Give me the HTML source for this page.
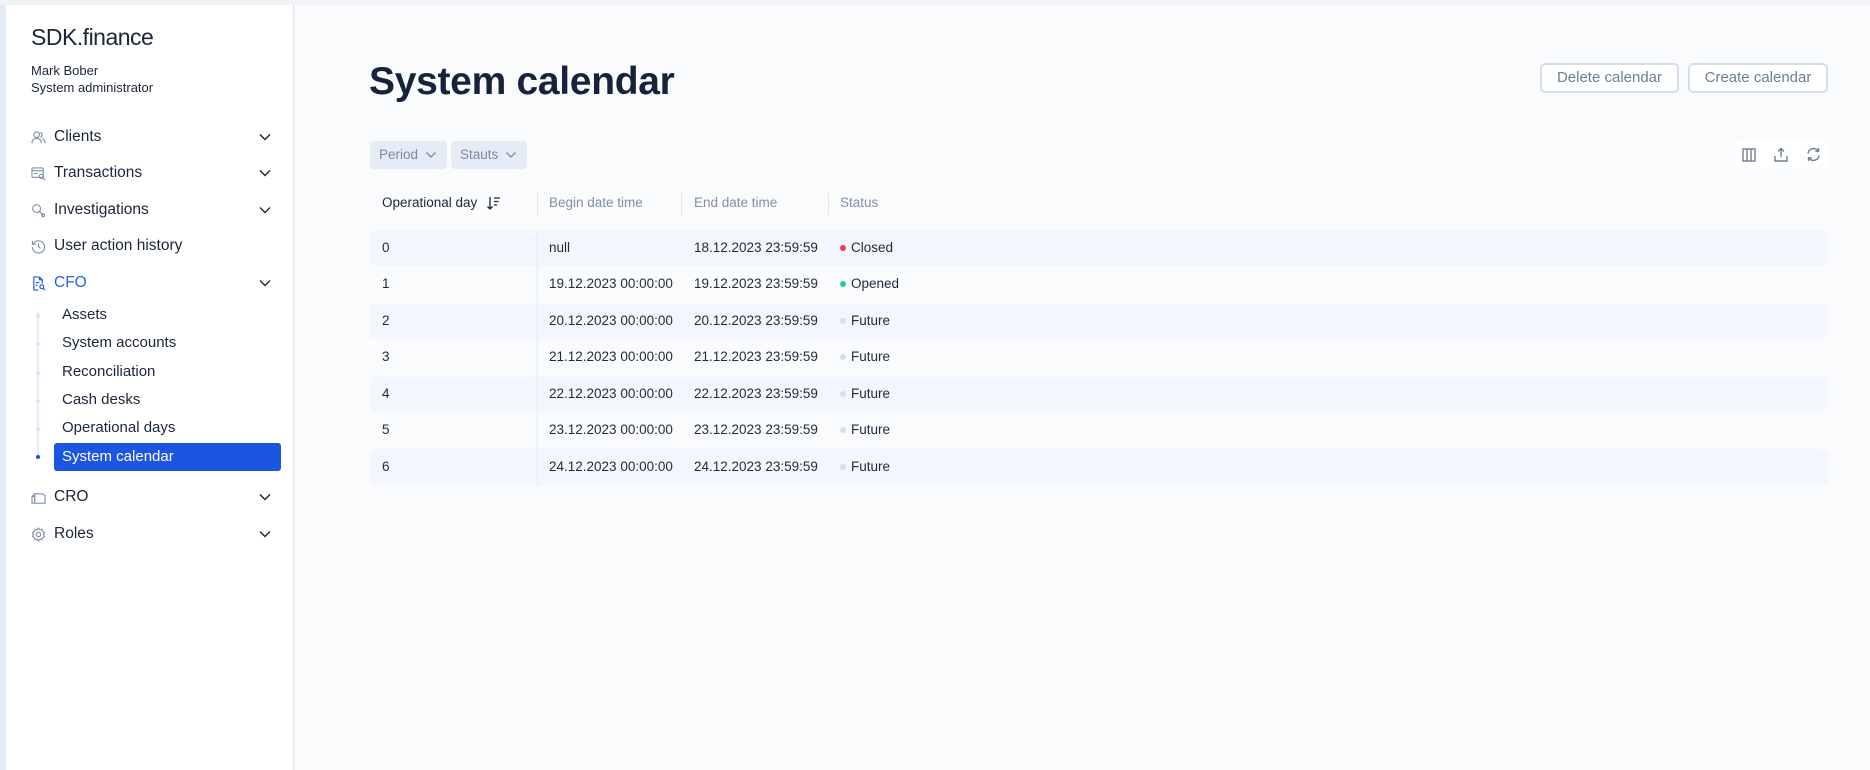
<!DOCTYPE html>
<html><head><meta charset="utf-8"><style>
*{box-sizing:border-box;margin:0;padding:0}
body{width:1870px;height:770px;background:#fafbfc;font-family:"Liberation Sans",sans-serif;position:relative;overflow:hidden;color:#1b2638}
.top{position:absolute;left:0;top:0;width:1870px;height:5px;background:#f1f3f6}
.lstrip{position:absolute;left:0;top:5px;width:6px;height:765px;background:#e4ebf5}
.side{position:absolute;left:6px;top:5px;width:289px;height:765px;background:#fff;border-right:2px solid #e6ecf4}
.a{position:absolute;white-space:nowrap}
.logo{left:31px;top:24px;font-size:23px;color:#1b2638;letter-spacing:-0.5px}
.nav{font-size:15.5px;color:#1b2638}
.ic{position:absolute;left:31px;width:15px;height:15px}
.chev{position:absolute;left:259px;width:12px;height:8px}
.sub{left:62px;font-size:15px;color:#1b2638}
.btn{position:absolute;top:63px;height:30px;border:2px solid #d3deea;border-radius:5px;background:#fff;color:#6b7f99;font-size:15px;text-align:center;line-height:26px}
.flt{position:absolute;top:141px;height:28px;background:#e5ecf6;border-radius:4px;color:#7a8aa3;font-size:13.5px;line-height:28px;padding-left:9px}
.row{position:absolute;left:370px;width:1458px;height:36px;border-radius:6px}
.row.s{background:#f4f6fd}
.row span{position:absolute;top:0;line-height:36px;font-size:13.5px;color:#1e2a3b}
.dot{display:inline-block;width:6px;height:6px;border-radius:3px;margin-right:5px;vertical-align:1px}
.th{position:absolute;top:195px;font-size:13.5px;color:#7f90a8}
.sep{position:absolute;top:193px;width:1px;height:22px;background:#e0e7f0}
</style></head><body>
<div class="top"></div><div class="lstrip"></div>
<div class="side"></div>
<div class="a logo">SDK.finance</div>
<div class="a" style="left:31px;top:63px;font-size:13px">Mark Bober</div>
<div class="a" style="left:31px;top:80px;font-size:13px">System administrator</div>

<svg class="ic" style="top:130px" viewBox="0 0 16 16" fill="none" stroke="#7f90a8" stroke-width="1.2"><circle cx="6" cy="5" r="3"/><path d="M1 14c0-3 2-5 5-5s5 2 5 5M10 2.5a3 3 0 010 5.5M12 9.5c2 .5 3 2.5 3 4.5"/></svg>
<div class="a nav" style="left:54px;top:128px">Clients</div>
<svg class="ic" style="top:166px" viewBox="0 0 16 16" fill="none" stroke="#7f90a8" stroke-width="1.2"><rect x="1" y="2" width="12" height="10" rx="1"/><path d="M1 5h12M3 8h4"/><circle cx="11" cy="11" r="2.3"/><path d="M12.7 12.7L15 15"/></svg>
<div class="a nav" style="left:54px;top:164px">Transactions</div>
<svg class="ic" style="top:203px" viewBox="0 0 16 16" fill="none" stroke="#7f90a8" stroke-width="1.2"><circle cx="6" cy="6" r="4.2"/><path d="M9 9l4 4"/><circle cx="13" cy="13" r="1.5"/></svg>
<div class="a nav" style="left:54px;top:201px">Investigations</div>
<svg class="ic" style="top:239px" viewBox="0 0 16 16" fill="none" stroke="#7f90a8" stroke-width="1.2"><path d="M2.5 5A6.5 6.5 0 1 1 1.5 8.5M1.5 2v3.5H5M8 4.5V8l2 2"/></svg>
<div class="a nav" style="left:54px;top:237px">User action history</div>
<svg class="ic" style="top:276px" viewBox="0 0 16 16" fill="none" stroke="#2563eb" stroke-width="1.3"><path d="M9 1H3v14h5M9 1l3 3v4M9 1v3h3M5 7h4M5 10h2"/><circle cx="11.5" cy="11.5" r="2"/><path d="M13 13l2 2"/></svg>
<div class="a nav" style="left:54px;top:274px;color:#2563eb">CFO</div>
<svg class="chev" style="top:133px" viewBox="0 0 12 8" fill="none" stroke="#1b2638" stroke-width="1.4"><path d="M1 1.5l5 5 5-5"/></svg>
<svg class="chev" style="top:169px" viewBox="0 0 12 8" fill="none" stroke="#1b2638" stroke-width="1.4"><path d="M1 1.5l5 5 5-5"/></svg>
<svg class="chev" style="top:206px" viewBox="0 0 12 8" fill="none" stroke="#1b2638" stroke-width="1.4"><path d="M1 1.5l5 5 5-5"/></svg>
<svg class="chev" style="top:279px" viewBox="0 0 12 8" fill="none" stroke="#1b2638" stroke-width="1.4"><path d="M1 1.5l5 5 5-5"/></svg>

<div class="a" style="left:37px;top:311px;width:2px;height:145px;background:#e4ebfb"></div>
<div class="a" style="left:36px;top:314px;width:4px;height:4px;border-radius:2px;background:#dbe4fa"></div>
<div class="a" style="left:36px;top:342px;width:4px;height:4px;border-radius:2px;background:#dbe4fa"></div>
<div class="a" style="left:36px;top:371px;width:4px;height:4px;border-radius:2px;background:#dbe4fa"></div>
<div class="a" style="left:36px;top:399px;width:4px;height:4px;border-radius:2px;background:#dbe4fa"></div>
<div class="a" style="left:36px;top:427px;width:4px;height:4px;border-radius:2px;background:#dbe4fa"></div>
<div class="a" style="left:36px;top:455px;width:4px;height:4px;border-radius:2px;background:#1d4fd8"></div>
<div class="a sub" style="top:306px">Assets</div>
<div class="a sub" style="top:334px">System accounts</div>
<div class="a sub" style="top:363px">Reconciliation</div>
<div class="a sub" style="top:391px">Cash desks</div>
<div class="a sub" style="top:419px">Operational days</div>
<div class="a" style="left:54px;top:443px;width:227px;height:28px;background:#1d55e3;border-radius:3px"></div>
<div class="a sub" style="top:448px;color:#fff">System calendar</div>

<svg class="ic" style="top:490px" viewBox="0 0 16 16" fill="none" stroke="#7f90a8" stroke-width="1.2"><path d="M4 4h8l3 2v8H4zM1 7h3v7H1z"/><path d="M4 4l-3 3"/></svg>
<div class="a nav" style="left:54px;top:488px">CRO</div>
<svg class="ic" style="top:527px" viewBox="0 0 16 16" fill="none" stroke="#7f90a8" stroke-width="1.2"><circle cx="8" cy="8" r="2.3"/><path d="M8 1l1.5 2 2.3-.6.6 2.3 2 1.3-1 2 1 2-2 1.3-.6 2.3-2.3-.6L8 15l-1.5-2-2.3.6-.6-2.3-2-1.3 1-2-1-2 2-1.3.6-2.3 2.3.6z"/></svg>
<div class="a nav" style="left:54px;top:525px">Roles</div>
<svg class="chev" style="top:493px" viewBox="0 0 12 8" fill="none" stroke="#1b2638" stroke-width="1.4"><path d="M1 1.5l5 5 5-5"/></svg>
<svg class="chev" style="top:530px" viewBox="0 0 12 8" fill="none" stroke="#1b2638" stroke-width="1.4"><path d="M1 1.5l5 5 5-5"/></svg>

<div class="a" style="left:369px;top:60px;font-size:39px;font-weight:bold;color:#16233a;letter-spacing:-0.3px">System calendar</div>
<div class="btn" style="left:1540px;width:139px">Delete calendar</div>
<div class="btn" style="left:1688px;width:140px">Create calendar</div>

<div class="flt" style="left:370px;width:77px">Period <svg width="12" height="8" viewBox="0 0 12 8" fill="none" stroke="#7a8aa3" stroke-width="1.3" style="margin-left:3px"><path d="M1.5 1.5l4.5 4.5 4.5-4.5"/></svg></div>
<div class="flt" style="left:451px;width:76px">Stauts <svg width="12" height="8" viewBox="0 0 12 8" fill="none" stroke="#7a8aa3" stroke-width="1.3" style="margin-left:3px"><path d="M1.5 1.5l4.5 4.5 4.5-4.5"/></svg></div>

<div class="a" style="left:1735px;top:141px;width:93px;height:28px;background:#fff;border-radius:4px"></div>
<svg class="a" style="left:1742px;top:148px" width="14" height="14" viewBox="0 0 14 14" fill="none" stroke="#6b7f99" stroke-width="1.4"><rect x="1" y="1" width="12" height="12"/><path d="M5 1v12M9 1v12"/></svg>
<svg class="a" style="left:1774px;top:147px" width="14" height="15" viewBox="0 0 14 15" fill="none" stroke="#6b7f99" stroke-width="1.4"><path d="M7 10V1.5M4 4.5l3-3 3 3M1 9v5h12V9"/></svg>
<svg class="a" style="left:1806px;top:147px" width="15" height="15" viewBox="0 0 15 15" fill="none" stroke="#6b7f99" stroke-width="1.4"><path d="M2 6.5a5.5 5.5 0 0 1 10-2.5M13 8.5a5.5 5.5 0 0 1-10 2.5M12.5 1v3.2H9.3M2.5 14v-3.2h3.2"/></svg>

<div class="th" style="left:382px;color:#1b2638">Operational day</div>
<svg class="a" style="left:487px;top:196px" width="13" height="14" viewBox="0 0 13 14" fill="none" stroke="#1b2638" stroke-width="1.3"><path d="M3 1v12M0.5 10.5L3 13l2.5-2.5M7 2h6M7 5.5h4.5M7 9h3"/></svg>
<div class="sep" style="left:537px"></div>
<div class="th" style="left:549px">Begin date time</div>
<div class="sep" style="left:681px"></div>
<div class="th" style="left:694px">End date time</div>
<div class="sep" style="left:828px"></div>
<div class="th" style="left:840px">Status</div>

<div class="row s" style="top:230px"><span style="left:12px">0</span><span style="left:179px">null</span><span style="left:324px">18.12.2023 23:59:59</span><span style="left:470px"><i class="dot" style="background:#f0384f"></i>Closed</span></div>
<div class="row" style="top:266px"><span style="left:12px">1</span><span style="left:179px">19.12.2023 00:00:00</span><span style="left:324px">19.12.2023 23:59:59</span><span style="left:470px"><i class="dot" style="background:#1ccf9c"></i>Opened</span></div>
<div class="row s" style="top:303px"><span style="left:12px">2</span><span style="left:179px">20.12.2023 00:00:00</span><span style="left:324px">20.12.2023 23:59:59</span><span style="left:470px"><i class="dot" style="background:#d5dfea"></i>Future</span></div>
<div class="row" style="top:339px"><span style="left:12px">3</span><span style="left:179px">21.12.2023 00:00:00</span><span style="left:324px">21.12.2023 23:59:59</span><span style="left:470px"><i class="dot" style="background:#d5dfea"></i>Future</span></div>
<div class="row s" style="top:376px"><span style="left:12px">4</span><span style="left:179px">22.12.2023 00:00:00</span><span style="left:324px">22.12.2023 23:59:59</span><span style="left:470px"><i class="dot" style="background:#d5dfea"></i>Future</span></div>
<div class="row" style="top:412px"><span style="left:12px">5</span><span style="left:179px">23.12.2023 00:00:00</span><span style="left:324px">23.12.2023 23:59:59</span><span style="left:470px"><i class="dot" style="background:#d5dfea"></i>Future</span></div>
<div class="row s" style="top:449px"><span style="left:12px">6</span><span style="left:179px">24.12.2023 00:00:00</span><span style="left:324px">24.12.2023 23:59:59</span><span style="left:470px"><i class="dot" style="background:#d5dfea"></i>Future</span></div>
<div class="a" style="left:536px;top:230px;width:2px;height:255px;background:#edf1fa"></div>
</body></html>
